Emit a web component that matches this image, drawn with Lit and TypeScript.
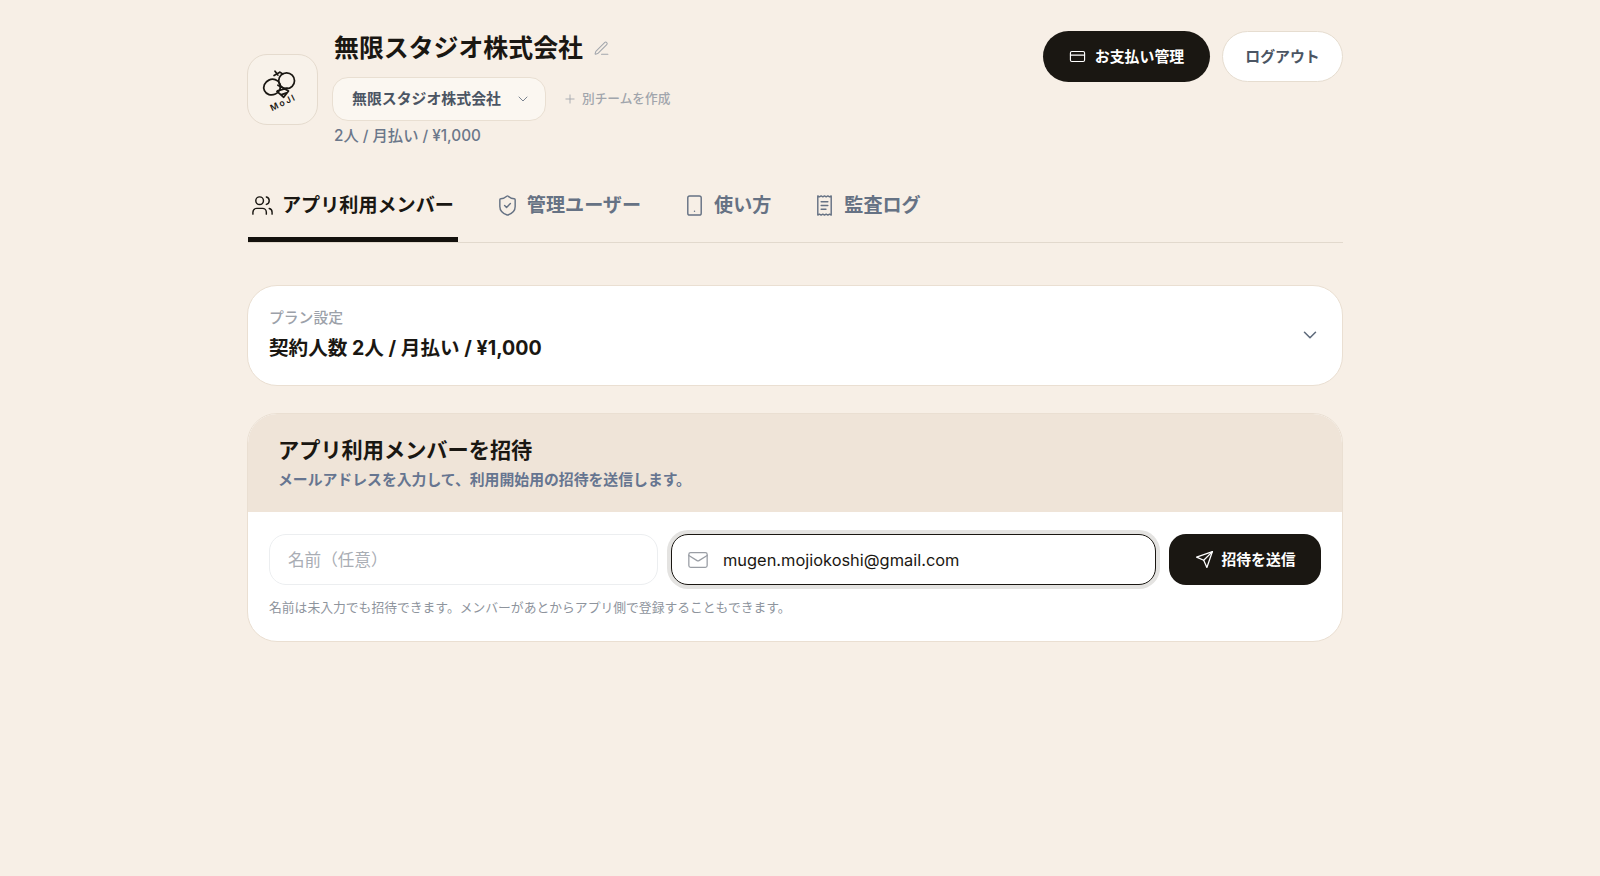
import { LitElement, html, css, svg } from "lit";
import { customElement } from "lit/decorators.js";

const ico = (body: unknown, cls = "") =>
  html`<svg class="ico ${cls}" viewBox="0 0 24 24" fill="none" stroke="currentColor" stroke-linecap="round" stroke-linejoin="round" aria-hidden="true">${body}</svg>`;

const users = svg`<path d="M16 21v-2a4 4 0 0 0-4-4H6a4 4 0 0 0-4 4v2"/><circle cx="9" cy="7" r="4"/><path d="M22 21v-2a4 4 0 0 0-3-3.87"/><path d="M16 3.13a4 4 0 0 1 0 7.75"/>`;
const shield = svg`<path d="M20 13c0 5-3.5 7.5-7.66 8.95a1 1 0 0 1-.67-.01C7.5 20.5 4 18 4 13V6a1 1 0 0 1 1-1c2 0 4.5-1.2 6.24-2.72a1.17 1.17 0 0 1 1.52 0C14.51 3.81 17 5 19 5a1 1 0 0 1 1 1z"/><path d="m9 12 2 2 4-4"/>`;
const phone = svg`<rect x="5" y="2" width="14" height="20" rx="2"/><path d="M12 18h.01"/>`;
const receipt = svg`<path d="M5 2v20l1.75-1 1.75 1 1.75-1 1.75 1 1.75-1 1.75 1 1.75-1 1.75 1V2l-1.75 1-1.75-1-1.75 1-1.75-1-1.75 1-1.75-1-1.75 1Z"/><path d="M8.5 8h7"/><path d="M8.5 12h7"/><path d="M8.5 16h5"/>`;
const card = svg`<rect x="2" y="5" width="20" height="14" rx="2"/><path d="M2 10h20"/>`;
const mail = svg`<rect x="2" y="4" width="20" height="16" rx="2"/><path d="m22 7-8.97 5.7a1.94 1.94 0 0 1-2.06 0L2 7"/>`;
const send = svg`<path d="m22 2-7 20-4-9-9-4Z"/><path d="M22 2 11 13"/>`;
const pencil = svg`<path d="M12 20h9"/><path d="M16.376 3.622a1 1 0 0 1 3.002 3.002L7.368 18.635a2 2 0 0 1-.855.506l-2.872.838a.5.5 0 0 1-.62-.62l.838-2.872a2 2 0 0 1 .506-.854z"/>`;
const chevron = svg`<path d="m6 9 6 6 6-6"/>`;
const plus = svg`<path d="M5 12h14"/><path d="M12 5v14"/>`;

@customElement("app-root")
export class AppRoot extends LitElement {
  static styles = css`
    :host {
      display: block;
      min-height: 876px;
      background: #f7efe6;
      color: #1a1712;
      font-family: Inter, "Noto Sans CJK JP", sans-serif;
      box-sizing: border-box;
      padding: 31px 0 0 248px;
    }
    * { box-sizing: border-box; }
    .wrap { width: 1095px; }
    .ico { display: block; flex: none; width: 20px; height: 20px; stroke-width: 2; }

    .head { display: flex; align-items: flex-start; }
    .logo {
      flex: none; width: 70.5px; height: 71px; margin: 23px 16.5px 0 -1px;
      border-radius: 20px; border: 1px solid #e5dbce; background: #f8f2ea;
    }
    .logo svg { display: block; width: 100%; height: 100%; }
    .logo text { font: 600 9px Inter, sans-serif; fill: #1a1712; letter-spacing: 1.8px; }
    .info { flex: 1; min-width: 0; }
    .title { display: flex; align-items: center; height: 34px; gap: 10px; }
    .title h1 { margin: 0; font-size: 24.9px; font-weight: 700; line-height: 34px; }
    .title .ico { width: 17px; height: 17px; stroke-width: 1.5; color: #a3a7ad; }
    .team { display: flex; align-items: center; margin: 12px 0 0 -2px; gap: 17px; }
    .select {
      display: flex; align-items: center; justify-content: space-between;
      width: 214px; height: 44px; padding: 0 14px 3px 19px;
      border: 1px solid #e9dfd2; border-radius: 16px; background: #fbf7f1;
      font-size: 14.9px; font-weight: 700; color: #4b5563;
    }
    .select .ico { width: 16px; height: 16px; stroke-width: 1.5; color: #7b8491; margin-top: 3px; }
    .new { display: flex; align-items: center; gap: 5px; padding-bottom: 3px; font-size: 12.7px; font-weight: 500; color: #a1a5ac; }
    .new .ico { width: 14px; height: 14px; stroke-width: 1.5; margin-top: 3px; }
    .sub { margin: 5px 0 0; font-size: 15.3px; line-height: 20px; font-weight: 500; color: #6b778a; }
    .acts { display: flex; gap: 13px; flex: none; }
    .btn {
      display: flex; align-items: center; justify-content: center; height: 51px;
      border-radius: 26px; font-size: 14.9px; font-weight: 700; padding-bottom: 2px;
    }
    .pay { width: 167px; gap: 9px; background: #1a1712; color: #fff; }
    .pay .ico { width: 17px; height: 17px; stroke-width: 1.6; margin-top: 2px; }
    .out { width: 121px; margin-left: -1px; background: #fff; border: 1px solid #e6ddd0; color: #4b5563; }

    .tabs { display: flex; gap: 35px; margin-top: 40px; border-bottom: 1px solid #e2d9cd; }
    .tab {
      display: flex; align-items: center; gap: 8px; padding: 3px 4px 18px 3px;
      border-bottom: 5px solid transparent;
      font-size: 19.1px; line-height: 28px; font-weight: 700; color: #667284;
    }
    .tab span { padding-top: 2px; }
    .tab .ico { width: 23px; height: 23px; stroke-width: 1.5; margin-top: 2px; }
    .tab.on { color: #1a1712; border-bottom-color: #14110d; }

    .panel { background: #fff; border: 1px solid #eadfd2; overflow: hidden; margin-left: -1px; width: 1096px; }
    .plan {
      display: flex; align-items: center; justify-content: space-between;
      margin-top: 42px; height: 101px; padding: 0 21px 2px 21px; border-radius: 30px;
    }
    .plan small { display: block; font-size: 14.8px; line-height: 20px; color: #9ca1a9; font-weight: 500; }
    .plan strong { display: block; margin-top: 6px; font-size: 19.6px; line-height: 28px; font-weight: 700; }
    .plan .ico { width: 22px; height: 22px; color: #5f6b7c; stroke-width: 1.7; }

    .invite { margin-top: 27px; border-radius: 30px; height: 229px; }
    .ihead { height: 98px; padding: 19px 30px 0; background: #efe4d8; }
    .ihead h2 { margin: 0; font-size: 21.2px; line-height: 34px; font-weight: 700; }
    .ihead p { margin: 2px 0 0; font-size: 14.85px; line-height: 22px; font-weight: 600; color: #667590; }
    .ibody { padding: 22px 21px 0; }
    .row { display: flex; gap: 13px; }
    .field {
      display: flex; align-items: center; height: 51px; border-radius: 17px;
      border: 1px solid #eceef0; background: #fff;
    }
    .field input {
      flex: 1; min-width: 0; border: 0; outline: 0; background: none; padding: 0;
      font: 400 16.4px Inter, "Noto Sans CJK JP", sans-serif; color: #1a1712;
    }
    .field input::placeholder { color: #a9adb4; opacity: 1; }
    .name { width: 389px; padding-left: 18px; }
    .name input { font-size: 16.6px; }
    .email {
      width: 485px; padding-left: 15px; gap: 14px;
      border: 1.5px solid #1a1712; box-shadow: 0 0 0 4px #e4e3e1;
    }
    .email .ico { width: 22px; height: 22px; stroke-width: 1.4; color: #9a9ea5; }
    .go {
      display: flex; align-items: center; justify-content: center; gap: 8px;
      width: 152px; height: 51px; padding-bottom: 2px; border-radius: 17px; background: #1a1712; color: #fff;
      font-size: 14.8px; font-weight: 700;
    }
    .go .ico { width: 19px; height: 19px; stroke-width: 1.6; margin-top: 2px; }
    .hint { margin: 13px 0 0; font-size: 12.8px; line-height: 20px; color: #8e949d; }
  `;

  render() {
    return html`<div class="wrap">
      <header class="head">
        <div class="logo">
          <svg viewBox="0 0 71 71" fill="none" stroke="#1a1712" stroke-width="1.8" stroke-linecap="round" stroke-linejoin="round" aria-hidden="true">
            <ellipse cx="25" cy="33" rx="8.800" ry="8" transform="rotate(-25 25 33)"/>
            <circle cx="40" cy="26.500" r="8.200"/>
            <path d="M27 21l6-3.500M28 16.500l3 4M33 17.500l3 2"/>
            <path d="M31 31l11 6-5 6.500-7-6M30.500 37l10-3M34 41l6-2"/>
            <text x="0" y="0" transform="translate(25 58) rotate(-26)" stroke="none">MoJI</text>
          </svg>
        </div>
        <div class="info">
          <div class="title"><h1>無限スタジオ株式会社</h1>${ico(pencil)}</div>
          <div class="team">
            <div class="select"><span>無限スタジオ株式会社</span>${ico(chevron)}</div>
            <div class="new">${ico(plus)}<span>別チームを作成</span></div>
          </div>
          <p class="sub">2人 / 月払い / ¥1,000</p>
        </div>
        <div class="acts">
          <div class="btn pay">${ico(card)}<span>お支払い管理</span></div>
          <div class="btn out">ログアウト</div>
        </div>
      </header>

      <nav class="tabs">
        <div class="tab on">${ico(users)}<span>アプリ利用メンバー</span></div>
        <div class="tab">${ico(shield)}<span>管理ユーザー</span></div>
        <div class="tab">${ico(phone)}<span>使い方</span></div>
        <div class="tab">${ico(receipt)}<span>監査ログ</span></div>
      </nav>

      <section class="panel plan">
        <div><small>プラン設定</small><strong>契約人数 2人 / 月払い / ¥1,000</strong></div>
        ${ico(chevron)}
      </section>

      <section class="panel invite">
        <div class="ihead">
          <h2>アプリ利用メンバーを招待</h2>
          <p>メールアドレスを入力して、利用開始用の招待を送信します。</p>
        </div>
        <div class="ibody">
          <div class="row">
            <label class="field name"><input placeholder="名前（任意）" /></label>
            <label class="field email">${ico(mail)}<input .value=${"mugen.mojiokoshi@gmail.com"} /></label>
            <div class="go">${ico(send)}<span>招待を送信</span></div>
          </div>
          <p class="hint">名前は未入力でも招待できます。メンバーがあとからアプリ側で登録することもできます。</p>
        </div>
      </section>
    </div>`;
  }
}
